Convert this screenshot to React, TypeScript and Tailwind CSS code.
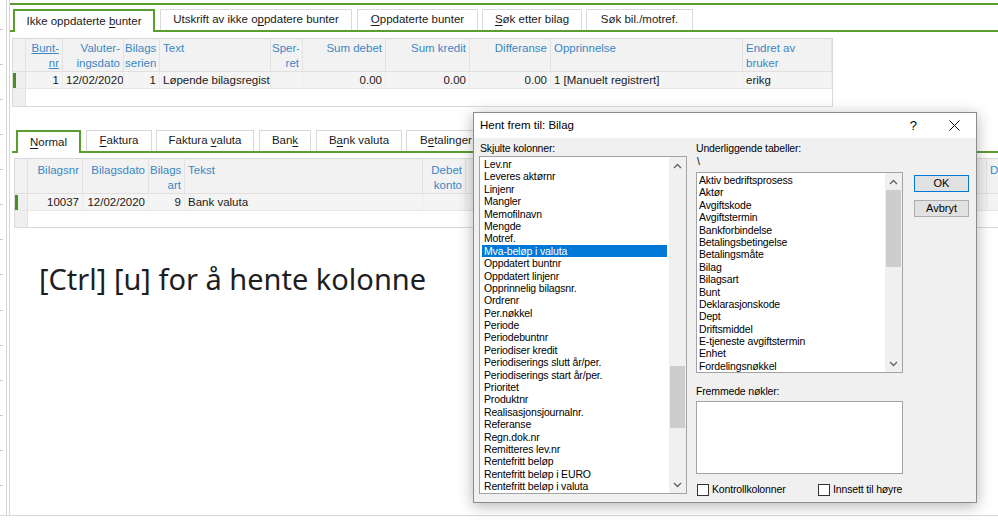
import React from 'react';

/* ============================================================
   Column / row data
   ============================================================ */

type Col = { w: string; head: string[]; right?: boolean; u?: boolean; pl?: string };

const topCols: Col[] = [
  { w: 'w-[37px]', head: ['Bunt-', 'nr'], right: true, u: true },
  { w: 'w-[61px]', head: ['Valuter-', 'ingsdato'], right: true },
  { w: 'w-[36px]', head: ['Bilags', 'serienr'], right: true, pl: 'pl-[1px]' },
  { w: 'w-[111px]', head: ['Text'] },
  { w: 'w-[32px]', head: ['Sper-', 'ret'], right: true, pl: 'pl-[1px]' },
  { w: 'w-[83px]', head: ['Sum debet'], right: true },
  { w: 'w-[84px]', head: ['Sum kredit'], right: true },
  { w: 'w-[81px]', head: ['Differanse'], right: true },
  { w: 'w-[192px]', head: ['Opprinnelse'] },
  { w: 'w-[89px]', head: ['Endret av', 'bruker'] },
];
const topRow = ['1', '12/02/2020', '1', 'Løpende bilagsregistrering', '', '0.00', '0.00', '0.00', '1 [Manuelt registrert]', 'erikg'];

const botCols: Col[] = [
  { w: 'w-[55px]', head: ['Bilagsnr'], right: true },
  { w: 'w-[66px]', head: ['Bilagsdato'], right: true },
  { w: 'w-[36px]', head: ['Bilags', 'art'], right: true, pl: 'pl-[1px]' },
  { w: 'w-[238px]', head: ['Tekst'] },
  { w: 'w-[43px]', head: ['Debet', 'konto'], right: true },
  { w: 'w-[521px]', head: [''] },
  { w: 'w-[80px]', head: ['Debet'] },
];
const botRow = ['10037', '12/02/2020', '9', 'Bank valuta', '', '', ''];

const hiddenCols = [
  'Lev.nr', 'Leveres aktørnr', 'Linjenr', 'Mangler', 'Memofilnavn', 'Mengde', 'Motref.',
  'Mva-beløp i valuta', 'Oppdatert buntnr', 'Oppdatert linjenr', 'Opprinnelig bilagsnr.',
  'Ordrenr', 'Per.nøkkel', 'Periode', 'Periodebuntnr', 'Periodiser kredit',
  'Periodiserings slutt år/per.', 'Periodiserings start år/per.', 'Prioritet', 'Produktnr',
  'Realisasjonsjournalnr.', 'Referanse', 'Regn.dok.nr', 'Remitteres lev.nr', 'Rentefritt beløp',
  'Rentefritt beløp i EURO', 'Rentefritt beløp i valuta',
];

const tables = [
  'Aktiv bedriftsprosess', 'Aktør', 'Avgiftskode', 'Avgiftstermin', 'Bankforbindelse',
  'Betalingsbetingelse', 'Betalingsmåte', 'Bilag', 'Bilagsart', 'Bunt', 'Deklarasjonskode',
  'Dept', 'Driftsmiddel', 'E-tjeneste avgiftstermin', 'Enhet', 'Fordelingsnøkkel',
];

/* ============================================================
   Tabs
   ============================================================ */

function Tab({ label, k = -1, w, active = false, ml = '' }: { label: string; k?: number; w: string; active?: boolean; ml?: string }) {
  const text = (
    <span>
      {k < 0 ? (
        label
      ) : (
        <>
          {label.slice(0, k)}
          <span className="underline underline-offset-2">{label[k]}</span>
          {label.slice(k + 1)}
        </>
      )}
    </span>
  );
  if (active) {
    return (
      <div className={`${w} ${ml} h-[23px] -mb-[2px] border-2 border-b-0 border-[#5a9e2f] bg-white flex items-center justify-center relative z-10 whitespace-nowrap`}>
        {text}
      </div>
    );
  }
  return (
    <div className={`${w} ${ml} h-[21px] border border-b-0 border-[#d9d9d9] bg-white flex items-center justify-center whitespace-nowrap overflow-hidden`}>
      {text}
    </div>
  );
}

/* ============================================================
   Grid
   ============================================================ */

function Grid({ cols, row, headH, headPt, emptyH }: { cols: Col[]; row: string[]; headH: string; headPt: string; emptyH: string }) {
  return (
    <div className="border border-[#d9d9d9] bg-white w-max">
      {/* header */}
      <div className={`flex ${headH} border-b border-[#e0e0e0] bg-[#f2f2f2]`}>
        <div className="w-[13px] shrink-0 border-r border-[#e2e2e2]" />
        {cols.map((c, i) => (
          <div
            key={i}
            className={`${c.w} shrink-0 border-r border-[#e2e2e2] ${headPt} ${c.pl ?? 'pl-[3px]'} pr-[3px] leading-[15px] text-[#3a87c4] ${c.right ? 'text-right' : 'text-left'}`}
          >
            {c.head.map((h, j) => (
              <div key={j} className={`whitespace-nowrap overflow-hidden ${c.u ? 'underline' : ''}`}>
                {h}
              </div>
            ))}
          </div>
        ))}
      </div>
      {/* data row */}
      <div className="flex h-[17px] border-b border-[#e6e6e6] bg-[#f4f4f4]">
        <div className="w-[13px] shrink-0 border-r border-[#e2e2e2] bg-[#efefef] pt-[1px]">
          <div className="w-[3px] h-[15px] bg-[#4a8f22]" />
        </div>
        {cols.map((c, i) => (
          <div
            key={i}
            className={`${c.w} shrink-0 border-r border-[#ececec] pl-[3px] pr-[3px] leading-[16px] whitespace-nowrap overflow-hidden ${c.right ? 'text-right' : 'text-left'}`}
          >
            {row[i]}
          </div>
        ))}
      </div>
      {/* empty row */}
      <div className={`flex ${emptyH}`}>
        <div className="w-[13px] shrink-0 border-r border-[#e2e2e2] bg-[#efefef]" />
      </div>
    </div>
  );
}

/* ============================================================
   Dialog pieces
   ============================================================ */

function Chevron({ up }: { up?: boolean }) {
  return (
    <svg width="9" height="6" viewBox="0 0 9 6">
      <polyline
        points={up ? '1,5 4.5,1.5 8,5' : '1,1 4.5,4.5 8,1'}
        fill="none"
        stroke="#606060"
        strokeWidth="1.3"
      />
    </svg>
  );
}

function ScrollBar({ thumb }: { thumb: string }) {
  return (
    <div className="w-[17px] shrink-0 bg-[#f0f0f0] flex flex-col">
      <div className="h-[17px] flex items-center justify-center">
        <Chevron up />
      </div>
      <div className="flex-1">
        <div className={`${thumb} mx-[1px] bg-[#cdcdcd]`} />
      </div>
      <div className="h-[17px] flex items-center justify-center">
        <Chevron />
      </div>
    </div>
  );
}

function ListBox({ items, h, thumb, selected = -1, itemPl }: { items: string[]; h: string; thumb: string; selected?: number; itemPl: string }) {
  return (
    <div className={`${h} border border-[#a3a3a3] bg-white flex overflow-hidden`}>
      <div className="flex-1 min-w-0 pt-[1px] px-[2px]">
        {items.map((t, i) => (
          <div
            key={t}
            className={`h-[12.4px] leading-[12.4px] ${itemPl} whitespace-nowrap ${i === selected ? 'bg-[#0078d7] text-white' : ''}`}
          >
            {t}
          </div>
        ))}
      </div>
      <ScrollBar thumb={thumb} />
    </div>
  );
}

function Check({ label }: { label: string }) {
  return (
    <div className="flex items-center">
      <div className="w-[12px] h-[12px] border border-[#333] bg-white ml-[1px]" />
      <span className="ml-[3px]">{label}</span>
    </div>
  );
}

function HentFremDialog() {
  return (
    <div className="absolute left-[473px] top-[112px] w-[504px] h-[391px] border border-[#8c8c8c] bg-[#f0f0f0] shadow-[0_3px_14px_rgba(0,0,0,0.3)] flex flex-col text-black">
      {/* title bar */}
      <div className="h-[25px] bg-white flex items-center pl-[6px] text-[11.5px]">
        <span className="flex-1">Hent frem til: Bilag</span>
        <span className="text-[13px]">?</span>
        <svg width="11" height="11" viewBox="0 0 11 11" className="ml-[32px] mr-[16px]">
          <line x1="0.5" y1="0.5" x2="10.5" y2="10.5" stroke="#111" strokeWidth="1" />
          <line x1="10.5" y1="0.5" x2="0.5" y2="10.5" stroke="#111" strokeWidth="1" />
        </svg>
      </div>

      {/* body */}
      <div className="flex-1 flex pt-[3px] pl-[5px] text-[10.5px] tracking-[-0.15px]">
        {/* left column */}
        <div className="w-[208px] flex flex-col">
          <div className="h-[14px] leading-[14px] pl-[1px]">Skjulte kolonner:</div>
          <div className="mt-[1px]">
            <ListBox items={hiddenCols} h="h-[338px]" thumb="mt-[192px] h-[62px]" selected={7} itemPl="pl-[2px]" />
          </div>
        </div>

        {/* right column */}
        <div className="w-[207px] ml-[9px] flex flex-col">
          <div className="h-[14px] leading-[14px]">Underliggende tabeller:</div>
          <div className="h-[12px] leading-[12px] pl-[1px]">\</div>
          <div className="mt-[5px]">
            <ListBox items={tables} h="h-[201px]" thumb="h-[77px]" itemPl="pl-[0px]" />
          </div>
          <div className="mt-[12px] h-[13px] leading-[13px]">Fremmede nøkler:</div>
          <div className="mt-[3px] h-[73px] border border-[#a3a3a3] bg-white" />
          <div className="mt-[8px] flex">
            <div className="w-[121px]">
              <Check label="Kontrollkolonner" />
            </div>
            <Check label="Innsett til høyre" />
          </div>
        </div>

        {/* buttons */}
        <div className="w-[55px] ml-[11px] pt-[34px] flex flex-col text-[11px] tracking-normal">
          <div className="h-[17px] border border-[#0078d7] bg-[#e1e1e1] flex items-center justify-center">OK</div>
          <div className="mt-[8px] h-[17px] border border-[#adadad] bg-[#e1e1e1] flex items-center justify-center">
            Avbryt
          </div>
        </div>
      </div>
    </div>
  );
}

/* ============================================================
   App
   ============================================================ */

export default function App() {
  const ticks = Array.from({ length: 14 });
  return (
    <div className="relative w-[998px] h-[520px] bg-white overflow-hidden flex flex-col font-['Liberation_Sans',Arial,sans-serif] text-[11.5px] text-[#1a1a1a]">
      <div className="flex-1 flex min-h-0">
        {/* left ruler */}
        <div className="w-[7px] shrink-0 border-r border-[#d4d4d4] flex flex-col justify-around py-[12px]">
          {ticks.map((_, i) => (
            <div key={i} className="w-[3px] h-[1px] bg-[#d9bfd0]" />
          ))}
        </div>
        <div className="w-[2px] shrink-0" />

        {/* main panel */}
        <div className="flex-1 min-w-0 border-l border-[#d6d6d6] pt-[3px] overflow-hidden">
          <div className="border-t-2 border-[#5a9e2f] pt-[4px]">
            {/* top tabs */}
            <div className="flex items-end border-b-2 border-[#5a9e2f] pl-[3px]">
              <Tab label="Ikke oppdaterte bunter" k={16} w="w-[142px]" active />
              <Tab label="Utskrift av ikke oppdatere bunter" k={18} w="w-[192px]" ml="ml-[5px]" />
              <Tab label="Oppdaterte bunter" k={0} w="w-[121px]" ml="ml-[5px]" />
              <Tab label="Søk etter bilag" k={0} w="w-[100px]" ml="ml-[4px]" />
              <Tab label="Søk bil./motref." w="w-[107px]" ml="ml-[4px]" />
            </div>

            <div className="mt-[6px] ml-[2px]">
              <Grid cols={topCols} row={topRow} headH="h-[33px]" headPt="pt-[2px]" emptyH="h-[17px]" />
            </div>

            {/* bottom tabs */}
            <div className="mt-[23px] ml-[2px] flex items-end border-b-2 border-[#5a9e2f] pl-[4px]">
              <Tab label="Normal" k={0} w="w-[65px]" active />
              <Tab label="Faktura" k={0} w="w-[66px]" ml="ml-[5px]" />
              <Tab label="Faktura valuta" k={8} w="w-[98px]" ml="ml-[4px]" />
              <Tab label="Bank" k={3} w="w-[52px]" ml="ml-[5px]" />
              <Tab label="Bank valuta" k={1} w="w-[86px]" ml="ml-[5px]" />
              <Tab label="Betalinger" k={1} w="w-[80px]" ml="ml-[4px]" />
            </div>

            <div className="mt-[5px] ml-[4px]">
              <Grid cols={botCols} row={botRow} headH="h-[35px]" headPt="pt-[4px]" emptyH="h-[16px]" />
            </div>

            {/* hint */}
            <div className="mt-[31px] pl-[29px] font-['Noto_Sans',sans-serif] text-[29px] leading-[40px] text-[#1e1e1e] whitespace-nowrap">
              [Ctrl] [u] for å hente kolonne
            </div>
          </div>
        </div>
      </div>
      <div className="h-[5px] border-t border-[#d8d8d8] bg-white" />

      <HentFremDialog />
    </div>
  );
}
